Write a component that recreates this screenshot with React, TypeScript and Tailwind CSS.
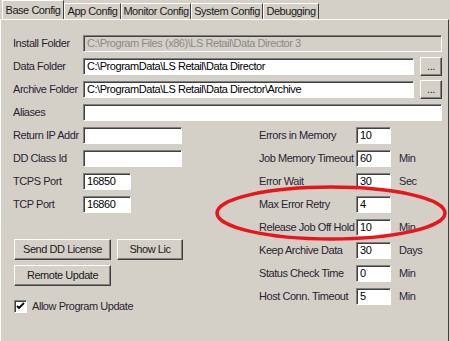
import React from 'react';

const font = "font-['Liberation_Sans',Arial,sans-serif] text-[11px] tracking-[-0.45px]";

// sunken classic text box
const Field: React.FC<{ value?: string; w: string; disabled?: boolean }> = ({ value = '', w, disabled }) => (
  <div
    className={`${w} h-[17px] flex items-center pl-[3px] leading-none whitespace-nowrap overflow-hidden border border-t-[#808080] border-l-[#808080] border-b-white border-r-white shadow-[inset_1px_1px_0_#404040] ${
      disabled ? 'bg-[#d4d0c8] text-[#8a8a8a]' : 'bg-white text-black'
    }`}
  >
    {value}
  </div>
);

const Button: React.FC<{ label: string; w: string; h?: string }> = ({ label, w, h = 'h-[21px]' }) => (
  <div
    className={`${w} ${h} flex items-center justify-center bg-[#d4d0c8] text-[#1a1a1a] border border-t-white border-l-white border-b-[#404040] border-r-[#404040] shadow-[inset_-1px_-1px_0_#808080]`}
  >
    {label}
  </div>
);

const Tab: React.FC<{ label: string; w: string; active?: boolean }> = ({ label, w, active }) =>
  active ? (
    <div className={`${w} h-[19px] flex items-center justify-center bg-[#d4d0c8] border-t border-l border-white border-r border-r-[#404040] relative z-10 -mb-[1px] text-[#1a1a1a]`}>
      {label}
    </div>
  ) : (
    <div className={`${w} h-[16px] mt-[3px] flex items-center justify-center bg-[#d4d0c8] border-t border-l border-white border-r border-r-[#404040] text-[#1a1a1a]`}>
      {label}
    </div>
  );

const Row: React.FC<{ label: string; labelW: string; children: React.ReactNode }> = ({ label, labelW, children }) => (
  <div className="flex items-center h-[17px]">
    <div className={`${labelW} shrink-0 text-[#2a1f33] whitespace-nowrap`}>{label}</div>
    {children}
  </div>
);

const Unit: React.FC<{ text?: string }> = ({ text }) => (
  <span className="ml-[8px] text-[#2a1f33]">{text}</span>
);

export default function App() {
  return (
    <div className={`w-[450px] h-[341px] bg-[#d4d0c8] relative overflow-hidden ${font}`}>
      {/* tab strip */}
      <div className="flex pl-[2px] h-[19px]">
        <Tab label="Base Config" w="w-[62px]" active />
        <Tab label="App Config" w="w-[57px]" />
        <Tab label="Monitor Config" w="w-[70px]" />
        <Tab label="System Config" w="w-[72px]" />
        <Tab label="Debugging" w="w-[56px]" />
      </div>

      {/* tab page */}
      <div className="w-[449px] h-[322px] border-t border-l border-white border-r border-r-[#404040] pt-[15px] pl-[12px]">
        <div className="flex flex-col gap-[6px]">
          <Row label="Install Folder" labelW="w-[70px]">
            <Field w="w-[359px]" value="C:\Program Files (x86)\LS Retail\Data Director 3" disabled />
          </Row>
          <Row label="Data Folder" labelW="w-[70px]">
            <Field w="w-[331px]" value="C:\ProgramData\LS Retail\Data Director" />
            <div className="ml-[6px] -mt-[1px]">
              <Button label="..." w="w-[22px]" h="h-[19px]" />
            </div>
          </Row>
          <Row label="Archive Folder" labelW="w-[70px]">
            <Field w="w-[331px]" value="C:\ProgramData\LS Retail\Data Director\Archive" />
            <div className="ml-[6px] -mt-[1px]">
              <Button label="..." w="w-[22px]" h="h-[19px]" />
            </div>
          </Row>
          <Row label="Aliases" labelW="w-[70px]">
            <Field w="w-[359px]" />
          </Row>
        </div>

        <div className="flex mt-[6px]">
          {/* left column */}
          <div className="w-[246px] flex flex-col">
            <div className="flex flex-col gap-[6px]">
              <Row label="Return IP Addr" labelW="w-[70px]">
                <Field w="w-[99px]" />
              </Row>
              <Row label="DD Class Id" labelW="w-[70px]">
                <Field w="w-[99px]" />
              </Row>
              <Row label="TCPS Port" labelW="w-[70px]">
                <Field w="w-[48px]" value="16850" />
              </Row>
              <Row label="TCP Port" labelW="w-[70px]">
                <Field w="w-[48px]" value="16860" />
              </Row>
            </div>
            <div className="mt-[26px] flex gap-[6px] pl-[1px]">
              <Button label="Send DD License" w="w-[97px]" />
              <Button label="Show Lic" w="w-[66px]" />
            </div>
            <div className="mt-[5px] pl-[1px]">
              <Button label="Remote Update" w="w-[97px]" />
            </div>
            <div className="mt-[12px] pl-[1px] flex items-center gap-[5px]">
              <div className="w-[13px] h-[13px] bg-white border border-t-[#808080] border-l-[#808080] border-b-white border-r-white shadow-[inset_1px_1px_0_#404040] flex items-center justify-center">
                <svg width="9" height="9" viewBox="0 0 9 9">
                  <path d="M1 4 L3 6 L8 1" fill="none" stroke="#000" strokeWidth="1.8" />
                </svg>
              </div>
              <span className="text-[#2a1f33]">Allow Program Update</span>
            </div>
          </div>

          {/* right column */}
          <div className="flex flex-col gap-[6px]">
            <Row label="Errors in Memory" labelW="w-[97px]">
              <Field w="w-[35px]" value="10" />
            </Row>
            <Row label="Job Memory Timeout" labelW="w-[97px]">
              <Field w="w-[35px]" value="60" />
              <Unit text="Min" />
            </Row>
            <Row label="Error Wait" labelW="w-[97px]">
              <Field w="w-[35px]" value="30" />
              <Unit text="Sec" />
            </Row>
            <Row label="Max Error Retry" labelW="w-[97px]">
              <Field w="w-[35px]" value="4" />
            </Row>
            <Row label="Release Job Off Hold" labelW="w-[97px]">
              <Field w="w-[35px]" value="10" />
              <Unit text="Min" />
            </Row>
            <Row label="Keep Archive Data" labelW="w-[97px]">
              <Field w="w-[35px]" value="30" />
              <Unit text="Days" />
            </Row>
            <Row label="Status Check Time" labelW="w-[97px]">
              <Field w="w-[35px]" value="0" />
              <Unit text="Min" />
            </Row>
            <Row label="Host Conn. Timeout" labelW="w-[97px]">
              <Field w="w-[35px]" value="5" />
              <Unit text="Min" />
            </Row>
          </div>
        </div>
      </div>

      {/* hand-drawn red annotation */}
      <svg className="absolute inset-0 pointer-events-none" width="450" height="341">
        <ellipse cx="331" cy="213" rx="114" ry="26" fill="none" stroke="#e8161b" strokeWidth="3.5" />
      </svg>
    </div>
  );
}
